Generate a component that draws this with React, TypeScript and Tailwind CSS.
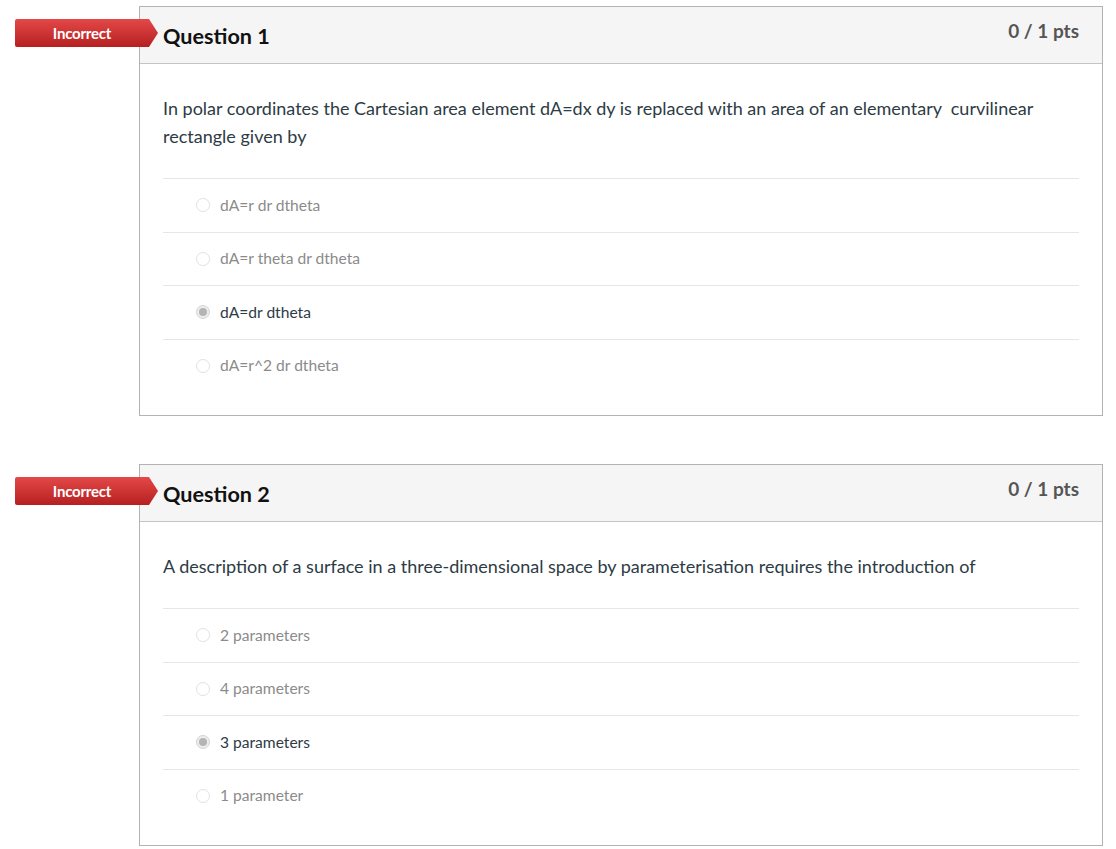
import React from "react";

type Answer = { text: string; selected?: boolean };

function Badge() {
  return (
    <div className="absolute left-[-124px] top-[13px] h-[28px] w-[144px]">
      <svg width="144" height="28" viewBox="0 0 144 28" className="absolute inset-0">
        <defs>
          <linearGradient id="bg" x1="0" y1="0" x2="0" y2="1">
            <stop offset="0" stopColor="#e44848" />
            <stop offset="1" stopColor="#b62020" />
          </linearGradient>
        </defs>
        <path d="M2 0 H134 L143 14 L134 28 H2 Q0 28 0 26 V2 Q0 0 2 0 Z" fill="url(#bg)" />
      </svg>
      <div className="relative flex h-full w-[134px] items-center justify-center text-[15px] font-bold text-white tracking-[-0.2px]">
        Incorrect
      </div>
    </div>
  );
}

function Radio({ selected }: { selected?: boolean }) {
  if (selected) {
    return (
      <span className="flex h-[14px] w-[14px] items-center justify-center rounded-full border border-[#d4d4d4] bg-[#ededed]">
        <span className="h-[8px] w-[8px] rounded-full bg-[#b4b4b4]" />
      </span>
    );
  }
  return <span className="block h-[14px] w-[14px] rounded-full border border-[#e2e2e2] bg-white" />;
}

function Question({
  n,
  text,
  answers,
}: {
  n: number;
  text: React.ReactNode;
  answers: Answer[];
}) {
  return (
    <div className="relative ml-[139px] w-[964px]">
      <Badge />
      <div className="border border-[#b3b3b3] bg-white">
        <div className="flex h-[57px] items-start justify-between border-b border-[#c4c4c4] bg-[#f5f5f5] px-[23px]">
          <div className="pt-[16px] text-[21.6px] font-bold leading-[26px] text-[#111]">Question {n}</div>
          <div className="pt-[12px] text-[19px] font-bold leading-[24px] text-[#555]">0 / 1 pts</div>
        </div>
        <div className="px-[23px] pt-[30px] pb-[23px]">
          <div className="text-[18px] leading-[28px] text-[#2d3b45]">{text}</div>
          <div className="mt-[28px]">
            {answers.map((a, i) => (
              <div
                key={i}
                className="flex h-[53.5px] items-center border-t border-[#e6e6e6] pl-[33px]"
              >
                <Radio selected={a.selected} />
                <span
                  className={
                    "ml-[10px] text-[15.6px] " + (a.selected ? "text-[#2d3b45]" : "text-[#8b8b8b]")
                  }
                >
                  {a.text}
                </span>
              </div>
            ))}
          </div>
        </div>
      </div>
    </div>
  );
}

export default function App() {
  return (
    <div
      className="min-h-[849px] bg-white pt-[6px]"
      style={{ fontFamily: "Lato, 'Open Sans', sans-serif" }}
    >
      <Question
        n={1}
        text={
          <>
            In polar coordinates the Cartesian area element dA=dx dy is replaced with an area of an elementary&nbsp; curvilinear
            <br />
            rectangle given by
          </>
        }
        answers={[
          { text: "dA=r dr dtheta" },
          { text: "dA=r theta dr dtheta" },
          { text: "dA=dr dtheta", selected: true },
          { text: "dA=r^2 dr dtheta" },
        ]}
      />
      <div className="h-[48px]" />
      <Question
        n={2}
        text={
          <>A description of a surface in a three-dimensional space by parameterisation requires the introduction of</>
        }
        answers={[
          { text: "2 parameters" },
          { text: "4 parameters" },
          { text: "3 parameters", selected: true },
          { text: "1 parameter" },
        ]}
      />
    </div>
  );
}
